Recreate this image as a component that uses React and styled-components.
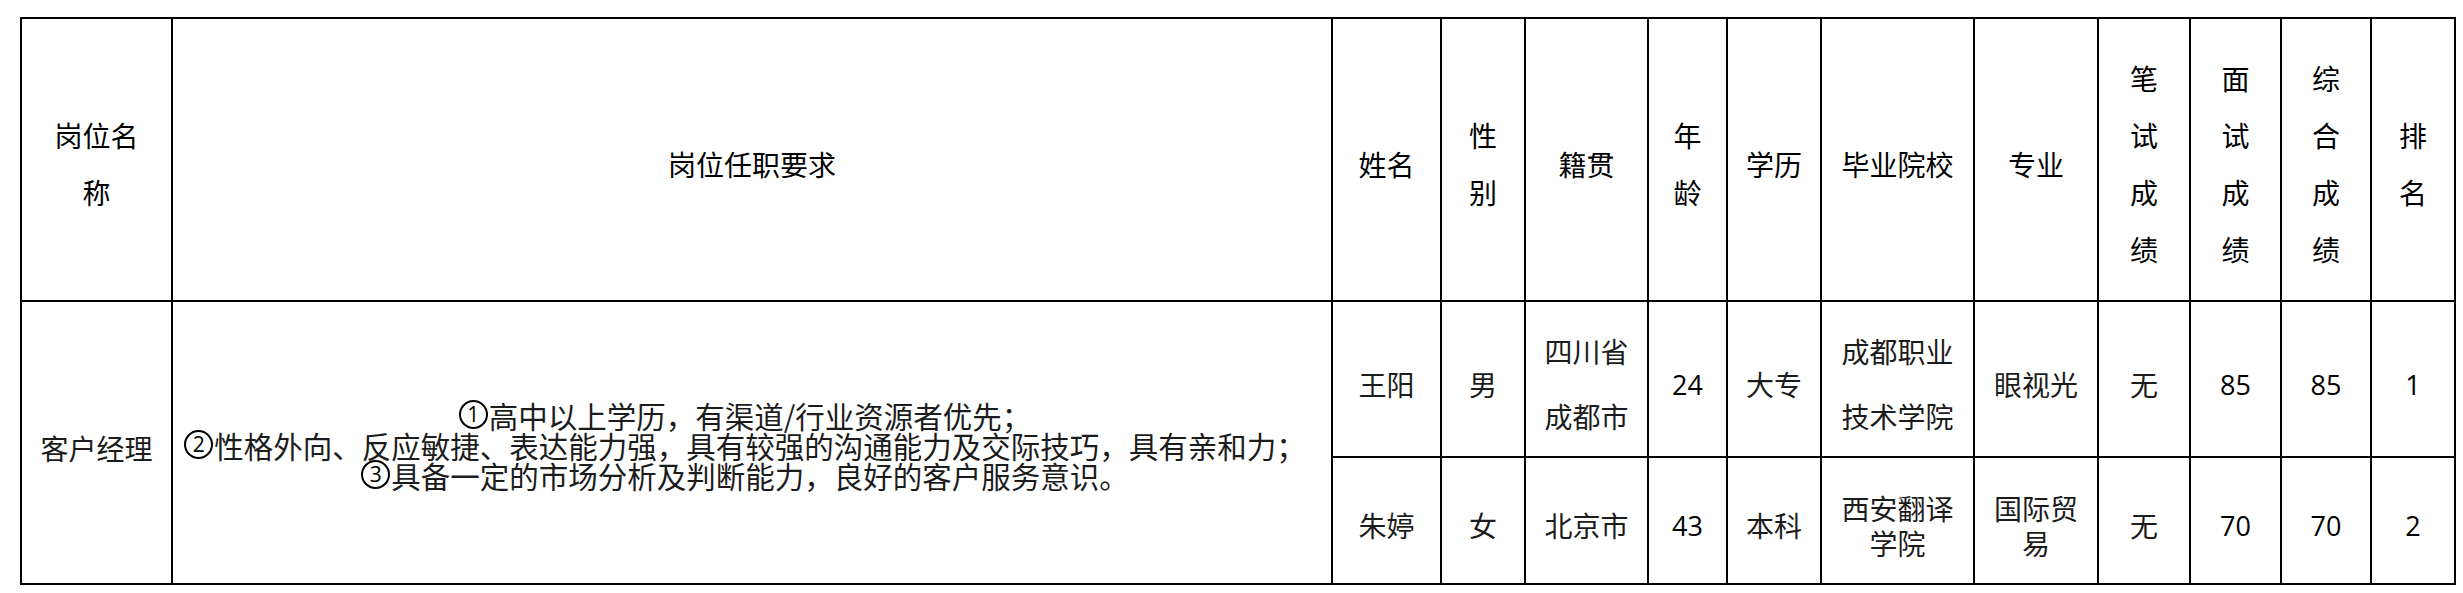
import React from "react";
import styled, { createGlobalStyle } from "styled-components";

const GlobalStyle = createGlobalStyle`
  html, body {
    margin: 0;
    background: #fff;
  }
  body {
    font-family: "Noto Sans CJK SC", "Noto Sans", sans-serif;
    color: #000;
  }
`;

const widths = [151, 1160, 109, 84, 123, 79, 94, 153, 124, 92, 91, 90, 84];

const headers = [
  ["岗位名", "称"],
  ["岗位任职要求"],
  ["姓名"],
  ["性", "别"],
  ["籍贯"],
  ["年", "龄"],
  ["学历"],
  ["毕业院校"],
  ["专业"],
  ["笔", "试", "成", "绩"],
  ["面", "试", "成", "绩"],
  ["综", "合", "成", "绩"],
  ["排", "名"],
];

const requirements = [
  ["1", "高中以上学历，有渠道/行业资源者优先；"],
  ["2", "性格外向、反应敏捷、表达能力强，具有较强的沟通能力及交际技巧，具有亲和力；"],
  ["3", "具备一定的市场分析及判断能力，良好的客户服务意识。"],
];

const people = [
  {
    lh: 65,
    cells: [
      ["王阳"],
      ["男"],
      ["四川省", "成都市"],
      ["24", true],
      ["大专"],
      ["成都职业", "技术学院"],
      ["眼视光"],
      ["无"],
      ["85", true],
      ["85", true],
      ["1", true],
    ],
  },
  {
    lh: 35,
    cells: [
      ["朱婷"],
      ["女"],
      ["北京市"],
      ["43", true],
      ["本科"],
      ["西安翻译", "学院"],
      ["国际贸", "易"],
      ["无"],
      ["70", true],
      ["70", true],
      ["2", true],
    ],
  },
];

const Page = styled.div`
  padding: 17px 0 0 20px;
`;

const Table = styled.table`
  border-collapse: collapse;
  table-layout: fixed;
  width: 2436px;
`;

const Row = styled.tr`
  height: ${(p) => p.$h}px;
`;

const HeadCell = styled.th`
  border: 2px solid #000;
  padding: 9px 0 0;
  font-size: 28px;
  font-weight: 400;
  line-height: 57px;
  text-align: center;
  vertical-align: middle;
  color: #000;
`;

const Cell = styled.td`
  border: 2px solid #000;
  padding: 10px 0 0;
  font-size: ${(p) => (p.$num ? "27px" : "28px")};
  font-family: ${(p) =>
    p.$num ? '"Open Sans", "Noto Sans", sans-serif' : "inherit"};
  line-height: ${(p) => p.$lh}px;
  text-align: center;
  vertical-align: middle;
  color: ${(p) => (p.$num ? "#000" : "#1c1c1c")};
  white-space: nowrap;
`;

const ReqCell = styled.td`
  border: 2px solid #000;
  padding: 4px 0 0 0;
  font-size: 29.5px;
  line-height: 30px;
  text-align: center;
  vertical-align: middle;
  color: #1c1c1c;
  white-space: nowrap;
`;

const ReqLine = styled.div`
  display: flex;
  justify-content: center;
  align-items: center;
  padding-right: 14px;
`;

const Circled = styled.span`
  display: inline-flex;
  align-items: center;
  justify-content: center;
  box-sizing: border-box;
  width: 29px;
  height: 29px;
  margin-right: 1px;
  border: 2px solid #000;
  border-radius: 50%;
  font-family: "Open Sans", "Noto Sans", sans-serif;
  font-size: 21px;
  line-height: 1;
  color: #000;
`;

const Lines = ({ items }) =>
  items.map((t, i) => (
    <React.Fragment key={i}>
      {i > 0 && <br />}
      {t}
    </React.Fragment>
  ));

export default function App() {
  return (
    <>
      <GlobalStyle />
      <Page>
        <Table>
          <colgroup>
            {widths.map((w, i) => (
              <col key={i} style={{ width: w }} />
            ))}
          </colgroup>
          <thead>
            <Row $h={283}>
              {headers.map((h, i) => (
                <HeadCell key={i}>
                  <Lines items={h} />
                </HeadCell>
              ))}
            </Row>
          </thead>
          <tbody>
            {people.map((p, r) => (
              <Row key={r} $h={r === 0 ? 156 : 127}>
                {r === 0 && (
                  <>
                    <Cell rowSpan={2} $lh={32}>
                      客户经理
                    </Cell>
                    <ReqCell rowSpan={2}>
                      {requirements.map(([n, text]) => (
                        <ReqLine key={n}>
                          <Circled>{n}</Circled>
                          <span>{text}</span>
                        </ReqLine>
                      ))}
                    </ReqCell>
                  </>
                )}
                {p.cells.map(([text, ...rest], i) => {
                  const num = rest[0] === true;
                  const items = num ? [text] : [text, ...rest];
                  return (
                    <Cell key={i} $lh={p.lh} $num={num}>
                      <Lines items={items} />
                    </Cell>
                  );
                })}
              </Row>
            ))}
          </tbody>
        </Table>
      </Page>
    </>
  );
}
